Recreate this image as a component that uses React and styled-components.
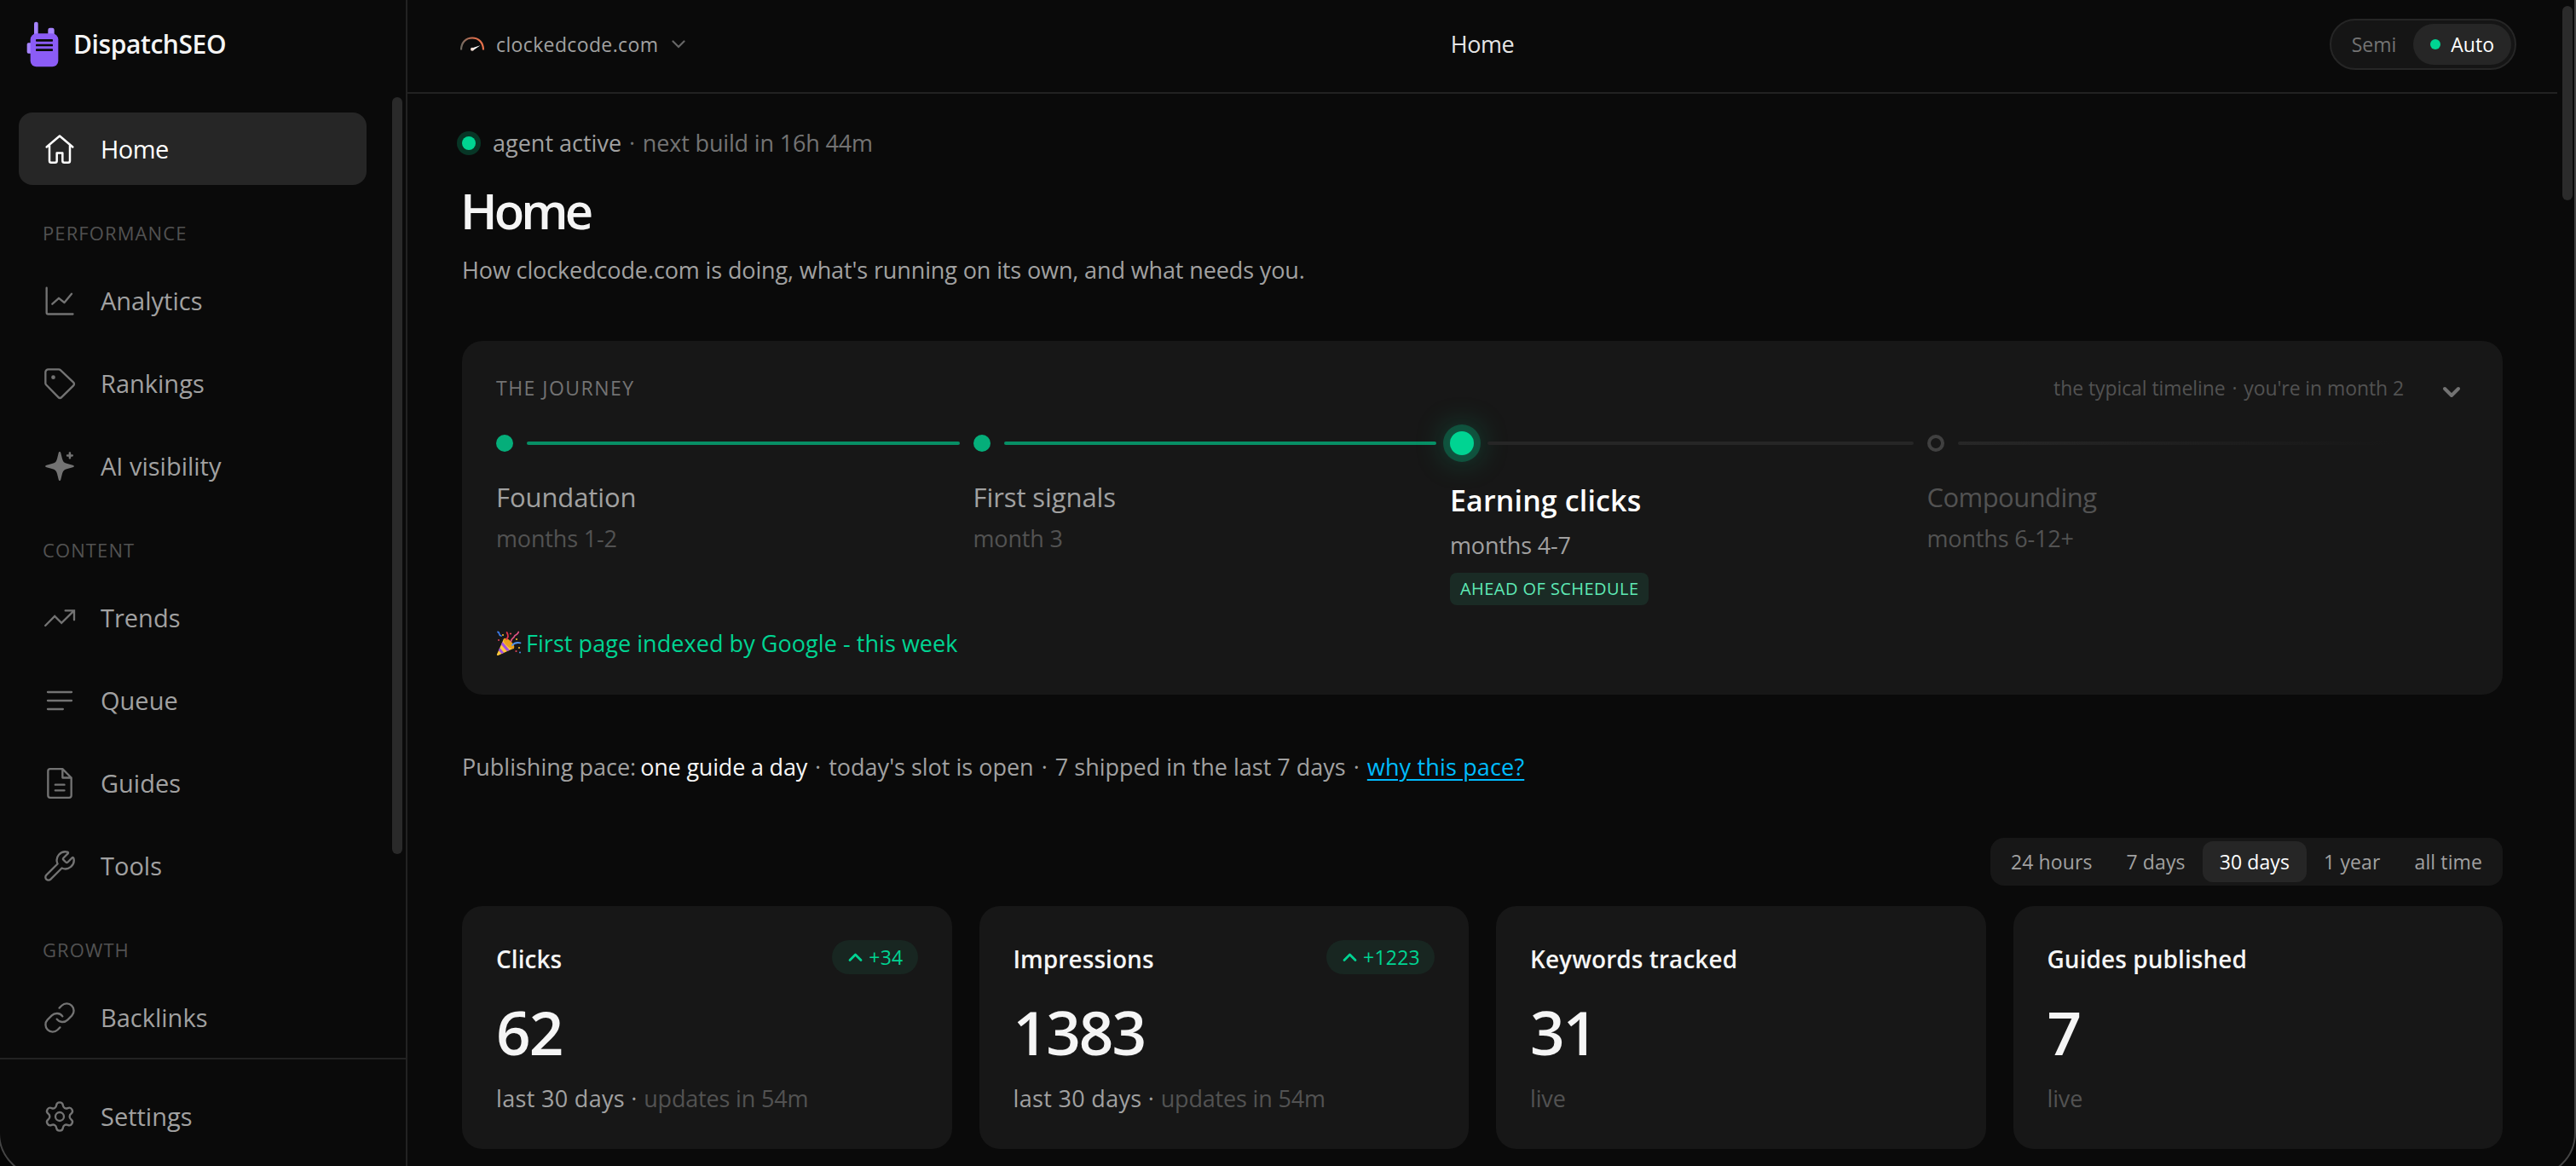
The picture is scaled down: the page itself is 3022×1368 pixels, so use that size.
import React from "react";
import styled, { createGlobalStyle, css } from "styled-components";
import { Link, Settings, Wrench } from "lucide-react";

function App() {
  return (
    <Page>
      <GlobalStyle />
      <Sidebar>
        <Brand>
          <LogoMark />
          DispatchSEO
        </Brand>
        <NavArea>
          <NavList>
            <NavItem $active>
              <HomeIcon />
              Home
            </NavItem>
            {navSections.map(({ title, items }) => (
              <NavSection key={title}>
                <NavLabel>{title}</NavLabel>
                {items.map(({ label, Icon }) => (
                  <NavItem key={label}>
                    <Icon />
                    {label}
                  </NavItem>
                ))}
              </NavSection>
            ))}
          </NavList>
          <SidebarThumb />
        </NavArea>
        <SidebarFooter>
          <NavItem>
            <Settings size={40} strokeWidth={1.4} />
            Settings
          </NavItem>
        </SidebarFooter>
      </Sidebar>

      <Main>
        <TopBar>
          <SiteSwitcher>
            <GaugeIcon />
            <span>clockedcode.com</span>
            <Chevron width="16" height="10" viewBox="0 0 16 10">
              <path d="M1.500 1.500L8 8l6.500-6.500" />
            </Chevron>
          </SiteSwitcher>
          <TopTitle>Home</TopTitle>
          <ModeToggle>
            <Mode>Semi</Mode>
            <Mode $active>
              <ModeDot />
              Auto
            </Mode>
          </ModeToggle>
        </TopBar>

        <Content>
          <AgentStatus>
            <AgentDot />
            <p>
              agent active{" "}
              <Muted>
                <Dot>·</Dot> next build in 16h 44m
              </Muted>
            </p>
          </AgentStatus>
          <Title>Home</Title>
          <Subtitle>
            How clockedcode.com is doing, what's running on its own, and what
            needs you.
          </Subtitle>

          <JourneyCard>
            <JourneyTop>
              <JourneyBody>
                <JourneyHeader>
                  <JourneyHeading>THE JOURNEY</JourneyHeading>
                  <JourneyNote>
                    the typical timeline <Dot>·</Dot> you're in month 2
                  </JourneyNote>
                </JourneyHeader>
                <Stages>
                  {stages.map(({ name, when, state, badge }) => (
                    <Stage key={name}>
                      <StageTrack>
                        <StageDot $state={state} />
                        <StageLine $state={state} />
                      </StageTrack>
                      <StageName $state={state}>{name}</StageName>
                      <StageWhen $state={state}>{when}</StageWhen>
                      {badge && <StageBadge>{badge}</StageBadge>}
                    </Stage>
                  ))}
                </Stages>
              </JourneyBody>
              <CollapseButton>
                <svg width="22" height="14" viewBox="0 0 22 14">
                  <path d="M3 3l8 8 8-8" />
                </svg>
              </CollapseButton>
            </JourneyTop>
            <Milestone>
              <PartyPopper />
              First page indexed by Google - this week
            </Milestone>
          </JourneyCard>

          <Pace>
            Publishing pace: <strong>one guide a day</strong> <Dot>·</Dot>{" "}
            today's slot is open <Dot>·</Dot> 7 shipped in the last 7 days{" "}
            <Dot>·</Dot> <a>why this pace?</a>
          </Pace>

          <RangeTabs>
            {ranges.map((range) => (
              <RangeTab key={range} $active={range === "30 days"}>
                {range}
              </RangeTab>
            ))}
          </RangeTabs>

          <StatGrid>
            {stats.map(({ label, value, change, period, note }) => (
              <StatCard key={label}>
                <StatHeader>
                  <h2>{label}</h2>
                  {change && (
                    <Change>
                      <svg width="18" height="12" viewBox="0 0 18 12">
                        <path d="M3 9.500L9.500 3 16 9.500" />
                      </svg>
                      {change}
                    </Change>
                  )}
                </StatHeader>
                <StatValue>{value}</StatValue>
                <StatFoot>
                  {period && <b>{period} · </b>}
                  {note}
                </StatFoot>
              </StatCard>
            ))}
          </StatGrid>
        </Content>
      </Main>
      <PageGutter>
        <PageThumb />
      </PageGutter>
      <WindowEdge />
    </Page>
  );
}

export default App;

/* icons */

const LogoMark = () => (
  <svg width="40" height="54" viewBox="0 0 120 162">
    <rect x="27" y="2" width="14" height="50" rx="6" fill="#a684ff" />
    <rect x="76" y="23" width="22" height="30" rx="7" fill="#a684ff" />
    <rect x="2" y="76" width="20" height="37" rx="5" fill="#a684ff" />
    <rect x="14" y="43" width="98" height="117" rx="21" fill="#8b5cf6" />
    <g fill="#0a0a0a">
      <rect x="33" y="63" width="60" height="8" rx="2" />
      <rect x="33" y="80" width="60" height="8" rx="2" />
      <rect x="33" y="97" width="60" height="8" rx="2" />
    </g>
  </svg>
);

const NavIcon = ({ children }) => (
  <svg
    width="40"
    height="40"
    viewBox="0 0 24 24"
    fill="none"
    stroke="currentColor"
    strokeWidth="1.4"
    strokeLinecap="round"
    strokeLinejoin="round"
  >
    {children}
  </svg>
);

const HomeIcon = () => (
  <NavIcon>
    <path
      strokeWidth="1.5"
      d="M2.8 10.500L12 2.700l9.200 7.800M4.800 9.300v10.900c0 .7.5 1.200 1.200 1.200h2.800c.7 0 1.200-.5 1.200-1.200v-5.500h4v5.500c0 .7.5 1.200 1.200 1.200H18c.7 0 1.200-.5 1.200-1.200V9.300"
    />
  </NavIcon>
);

const ChartIcon = () => (
  <NavIcon>
    <path d="M2.800 2.800v17.400c0 .6.5 1.100 1.100 1.100h17.400M6.800 14.200l4.600-4.100 3.900 3.100L20.400 7" />
  </NavIcon>
);

const TagIcon = () => (
  <NavIcon>
    <path d="M4 2h7.300a1.800 1.800 0 0 1 1.200.5l9.200 8.700a1.500 1.500 0 0 1 0 2.200l-8.400 8.300a1.500 1.500 0 0 1-2.200 0l-8.600-8.800a1.600 1.600 0 0 1-.5-1.200V4a2 2 0 0 1 2-2z" />
    <circle cx="7.5" cy="7.6" r="1.4" fill="currentColor" stroke="none" />
  </NavIcon>
);

const SparkleIcon = () => (
  <NavIcon>
    <g fill="currentColor" stroke="none">
      <path d="M12 1.800c.5 0 .7.400.8.900l1 4c.5 1.900 1.200 2.800 3.100 3.400l4.300 1.100c.6.200.9.400.9.800s-.3.600-.9.800l-4.300 1.100c-1.900.6-2.600 1.500-3.100 3.400l-1 4c-.1.500-.3.900-.8.900s-.7-.4-.8-.9l-1-4c-.5-1.900-1.200-2.800-3.100-3.400l-4.300-1.100c-.6-.2-.9-.4-.9-.8s.3-.6.9-.8l4.300-1.100c1.900-.6 2.600-1.500 3.100-3.400l1-4c.1-.5.300-.9.800-.9z" />
      <path d="M19.100 2c.4 0 .8.200.8.600v1.100H21c.4 0 .6.400.6.700s-.2.800-.6.800h-1.100v1.100c0 .4-.4.600-.8.600s-.7-.2-.7-.6V5.200h-1.100c-.4 0-.6-.4-.6-.8s.2-.7.600-.7h1.100V2.600c0-.4.3-.6.7-.6z" />
    </g>
  </NavIcon>
);

const TrendIcon = () => (
  <NavIcon>
    <path
      strokeLinejoin="miter"
      d="M1.900 17.400l6.600-6.700 4.800 4.800L22 7M16 6.800h6.200v6.500"
    />
  </NavIcon>
);

const QueueIcon = () => (
  <NavIcon>
    <path d="M3.600 6h16.800M3.600 12h16.800M3.600 18h10.700" />
  </NavIcon>
);

const GuideIcon = () => (
  <NavIcon>
    <path d="M14 1.900H5.300c-.8 0-1.500.7-1.500 1.500v17.200c0 .8.7 1.500 1.500 1.500h13.400c.8 0 1.500-.7 1.500-1.500V8.100L14 1.900v6.200h6.200M8.900 13h6.400M8.900 17h6.400" />
  </NavIcon>
);

const WrenchIcon = () => <Wrench size={40} strokeWidth={1.4} />;
const LinkIcon = () => <Link size={40} strokeWidth={1.4} />;

const GaugeIcon = () => (
  <svg width="32" height="32" viewBox="0 0 32 32">
    <defs>
      <linearGradient id="gauge" x1="0" x2="1">
        <stop offset="0" stopColor="#6f6a61" />
        <stop offset="0.55" stopColor="#d96f4e" />
        <stop offset="1" stopColor="#e8714b" />
      </linearGradient>
    </defs>
    <path
      d="M3 22.500C3 14 8.500 8.500 16 8.500S29 14 29 22.500"
      fill="none"
      stroke="url(#gauge)"
      strokeWidth="2.2"
    />
    <path d="M15.600 20.400L25.500 17.200l-8.300 5.800z" fill="#fff" />
    <circle cx="16" cy="21.800" r="2" fill="#f3dcd2" />
  </svg>
);

const PartyPopper = () => (
  <svg width="30" height="30" viewBox="0 0 30 30">
    <path d="M9 9.500L1 27.500c-.4 1 .4 1.800 1.400 1.400L21 20.500z" fill="#ffc83d" />
    <path
      d="M7.500 13l8.300 9.800-3 1.300L6 16.300zM4.300 20l5 5.700-2.800 1.200-3.600-3.900z"
      fill="#a04fe0"
    />
    <ellipse
      cx="15"
      cy="15"
      rx="3.6"
      ry="8.2"
      transform="rotate(-46 15 15)"
      fill="#e9a01c"
    />
    <g fill="none" strokeWidth="1.8" strokeLinecap="round">
      <path d="M12 10c2.500-2 2.300-5 .6-8" stroke="#e2344c" />
      <path d="M19 17c2-2.500 5.500-3.500 9.500-2.700" stroke="#4b8ff0" />
      <path
        d="M17.500 12.500c.4-4 3-3.500 3.800-5.800.7-2.300 3.500-1 5-5.200"
        stroke="#e05284"
      />
      <path d="M2 1.500c3 .5 0 3.500 4 4.500" stroke="#3d7be8" />
    </g>
    <g fill="#f2b52c">
      <circle cx="8" cy="5" r="1.1" />
      <circle cx="24" cy="10" r="1.1" />
      <circle cx="27" cy="20" r="1.1" />
    </g>
    <g fill="#e2445c">
      <circle cx="17" cy="3.5" r="1.1" />
      <circle cx="23.5" cy="24" r="1.1" />
      <circle cx="3" cy="11" r="1" />
    </g>
    <circle cx="28" cy="25.5" r="1" fill="#4b8ff0" />
  </svg>
);

/* data */

const navSections = [
  {
    title: "PERFORMANCE",
    items: [
      { label: "Analytics", Icon: ChartIcon },
      { label: "Rankings", Icon: TagIcon },
      { label: "AI visibility", Icon: SparkleIcon },
    ],
  },
  {
    title: "CONTENT",
    items: [
      { label: "Trends", Icon: TrendIcon },
      { label: "Queue", Icon: QueueIcon },
      { label: "Guides", Icon: GuideIcon },
      { label: "Tools", Icon: WrenchIcon },
    ],
  },
  {
    title: "GROWTH",
    items: [{ label: "Backlinks", Icon: LinkIcon }],
  },
];

const stages = [
  { name: "Foundation", when: "months 1-2", state: "done" },
  { name: "First signals", when: "month 3", state: "done" },
  {
    name: "Earning clicks",
    when: "months 4-7",
    state: "current",
    badge: "AHEAD OF SCHEDULE",
  },
  { name: "Compounding", when: "months 6-12+", state: "future" },
];

const ranges = ["24 hours", "7 days", "30 days", "1 year", "all time"];

const stats = [
  {
    label: "Clicks",
    value: "62",
    change: "+34",
    period: "last 30 days",
    note: "updates in 54m",
  },
  {
    label: "Impressions",
    value: "1383",
    change: "+1223",
    period: "last 30 days",
    note: "updates in 54m",
  },
  { label: "Keywords tracked", value: "31", note: "live" },
  { label: "Guides published", value: "7", note: "live" },
];

/* styles */

const GlobalStyle = createGlobalStyle`
  * {
    box-sizing: border-box;
    margin: 0;
  }

  body {
    background: #0a0a0a;
    color: #a1a1a1;
    font-family: "Open Sans", sans-serif;
    font-size: 27px;
    line-height: 40px;
    overflow: hidden;
    -webkit-font-smoothing: antialiased;
  }

  svg {
    display: block;
    flex-shrink: 0;
  }
`;

const Page = styled.div`
  position: relative;
  display: flex;
  width: 3022px;
  height: 1368px;
  overflow: hidden;
`;

const Sidebar = styled.aside`
  display: flex;
  flex-direction: column;
  flex-shrink: 0;
  width: 478px;
  border-right: 2px solid #222;
`;

const Brand = styled.div`
  display: flex;
  align-items: center;
  gap: 15px;
  height: 110px;
  padding: 0 0 6px 31px;
  color: #f5f5f5;
  font-size: 30px;
  font-weight: 600;
  letter-spacing: -0.014em;
`;

const NavArea = styled.div`
  display: flex;
  flex: 1;
  min-height: 0;
  padding-right: 4px;
  overflow: hidden;
`;

const NavList = styled.nav`
  flex: 1;
  padding: 22px 30px 0 22px;
`;

const SidebarThumb = styled.div`
  width: 12px;
  height: 888px;
  margin-top: 4px;
  border-radius: 6px;
  background: #2a2a2a;
`;

const NavSection = styled.div``;

const NavLabel = styled.div`
  height: 93px;
  padding: 36px 0 0 28px;
  color: #525252;
  font-size: 22px;
  letter-spacing: 0.05em;
`;

const NavItem = styled.div`
  display: flex;
  align-items: center;
  gap: 28px;
  height: 85px;
  padding-left: 28px;
  border-radius: 16px;
  color: #a1a1a1;
  font-size: 29px;

  & + & {
    margin-top: 12px;
  }

  svg {
    color: #737373;
  }

  ${({ $active }) =>
    $active &&
    css`
      background: #262626;
      color: #fff;
      font-weight: 500;
      letter-spacing: -0.02em;

      svg {
        color: #fff;
      }
    `}
`;

const SidebarFooter = styled.div`
  height: 127px;
  padding: 24px 46px 0 22px;
  border-top: 2px solid #222;
`;

const Main = styled.main`
  flex: 1;
  min-width: 0;
`;

const TopBar = styled.header`
  display: grid;
  grid-template-columns: 1fr auto 1fr;
  align-items: center;
  height: 110px;
  padding: 0 48px 4px;
  border-bottom: 2px solid #222;
`;

const SiteSwitcher = styled.div`
  display: flex;
  align-items: center;
  gap: 12px;
  padding-left: 12px;
  font-size: 23px;
  letter-spacing: 0.016em;
`;

const Chevron = styled.svg`
  margin-left: 4px;
  fill: none;
  stroke: #666;
  stroke-width: 2.2;
  stroke-linecap: round;
`;

const TopTitle = styled.div`
  color: #e5e5e5;
  font-weight: 500;
  letter-spacing: -0.015em;
`;

const ModeToggle = styled.div`
  display: flex;
  justify-self: end;
  height: 60px;
  padding: 4px;
  border: 2px solid #262626;
  border-radius: 30px;
  background: #151515;
`;

const Mode = styled.div`
  display: flex;
  align-items: center;
  gap: 12px;
  padding: 0 20px;
  border-radius: 24px;
  color: #737373;
  font-size: 23px;

  ${({ $active }) =>
    $active &&
    css`
      background: #262626;
      color: #fff;
      font-weight: 500;
    `}
`;

const ModeDot = styled.span`
  width: 12px;
  height: 12px;
  border-radius: 50%;
  background: #00d492;
`;

const Content = styled.div`
  padding: 38px 64px 0;
`;

/* middle dot between two facts on one line */
const Dot = styled.span`
  margin: 0 2px;
`;

const AgentStatus = styled.div`
  display: flex;
  align-items: center;
  gap: 20px;
`;

const AgentDot = styled.span`
  width: 16px;
  height: 16px;
  border-radius: 50%;
  background: #00d492;
  box-shadow: 0 0 0 6px rgba(0, 188, 125, 0.25);
`;

const Muted = styled.span`
  color: #737373;
  letter-spacing: -0.006em;
`;

const Title = styled.h1`
  margin: 23px 0 0 -2px;
  color: #f5f5f5;
  font-size: 58px;
  font-weight: 600;
  line-height: 72px;
  letter-spacing: -0.067em;
`;

const Subtitle = styled.p`
  margin-top: 14px;
  letter-spacing: -0.0045em;
`;

const Card = styled.section`
  border-radius: 24px;
  background: #171717;
`;

const JourneyCard = styled(Card)`
  height: 415px;
  margin-top: 63px;
  padding: 39px 40px 0;
`;

const JourneyTop = styled.div`
  display: flex;
  gap: 36px;
`;

const JourneyBody = styled.div`
  flex: 1;
`;

const JourneyHeader = styled.div`
  display: flex;
  justify-content: space-between;
  font-size: 23px;
  line-height: 33px;
`;

const JourneyHeading = styled.h2`
  color: #737373;
  font-size: inherit;
  font-weight: 400;
  letter-spacing: 0.064em;
`;

const JourneyNote = styled.span`
  color: #525252;
  letter-spacing: -0.004em;
`;

const Stages = styled.div`
  display: grid;
  grid-template-columns: repeat(4, 1fr);
  height: 204px;
  margin-top: 34px;
`;

const Stage = styled.div`
  display: flex;
  flex-direction: column;
  align-items: flex-start;
`;

const StageTrack = styled.div`
  display: flex;
  align-items: center;
  align-self: stretch;
  gap: 16px;
  height: 28px;
  padding-right: 16px;
`;

const dotStyles = {
  done: css`
    width: 20px;
    height: 20px;
    background: #05ae7a;
  `,
  current: css`
    width: 28px;
    height: 28px;
    background: #00d492;
    box-shadow: 0 0 0 8px rgba(0, 212, 146, 0.25),
      0 0 36px 4px rgba(0, 212, 146, 0.35);
  `,
  future: css`
    width: 20px;
    height: 20px;
    border: 4px solid #404040;
  `,
};

const StageDot = styled.span`
  flex-shrink: 0;
  border-radius: 50%;
  ${({ $state }) => dotStyles[$state]}
`;

const lineColors = {
  done: "#078f65",
  current: "#262626",
  future: "linear-gradient(90deg, #272727, #171717)",
};

const StageLine = styled.span`
  flex: 1;
  height: 4px;
  border-radius: 2px;
  background: ${({ $state }) => lineColors[$state]};
`;

const nameStyles = {
  done: css`
    color: #a1a1a1;
    letter-spacing: -0.003em;
  `,
  current: css`
    color: #fff;
    font-size: 34px;
    font-weight: 600;
    line-height: 57px;
    letter-spacing: 0.004em;
  `,
  future: css`
    color: #525252;
    letter-spacing: -0.018em;
  `,
};

const StageName = styled.h3`
  margin-top: 25px;
  font-size: 31px;
  font-weight: 400;
  line-height: 49px;
  ${({ $state }) => nameStyles[$state]}
`;

const StageWhen = styled.p`
  margin-top: 4px;
  color: ${({ $state }) => ($state === "current" ? "#a1a1a1" : "#525252")};
  letter-spacing: -0.006em;
`;

const StageBadge = styled.span`
  height: 38px;
  margin-top: 12px;
  padding: 0 12px;
  border-radius: 8px;
  background: #1a2b25;
  color: #5ee9b5;
  font-size: 20px;
  line-height: 37px;
  letter-spacing: 0.022em;
`;

const CollapseButton = styled.div`
  display: flex;
  align-items: center;
  justify-content: center;
  width: 40px;
  height: 42px;

  path {
    fill: none;
    stroke: #737373;
    stroke-width: 4;
    stroke-linecap: round;
    stroke-linejoin: round;
  }
`;

const Milestone = styled.div`
  display: flex;
  align-items: center;
  gap: 5px;
  margin-top: 25px;
  color: #00d492;
  letter-spacing: 0.002em;
`;

const Pace = styled.p`
  margin-top: 65px;

  strong {
    margin-left: -2px;
    color: #f5f5f5;
    font-weight: 500;
    letter-spacing: -0.007em;
  }

  a {
    color: #00bcff;
    letter-spacing: 0.006em;
    text-decoration: underline;
    text-decoration-thickness: 2px;
    text-underline-offset: 4px;
  }
`;

const RangeTabs = styled.div`
  display: flex;
  width: fit-content;
  height: 56px;
  margin: 63px 0 0 auto;
  padding: 4px;
  border-radius: 16px;
  background: #171717;
`;

const RangeTab = styled.div`
  padding: 0 20px;
  border-radius: 12px;
  background: ${({ $active }) => ($active ? "#262626" : "none")};
  color: ${({ $active }) => ($active ? "#fff" : "#a1a1a1")};
  font-size: 23px;
  font-weight: ${({ $active }) => ($active ? 500 : 400)};
  line-height: 48px;
  letter-spacing: 0.005em;
`;

const StatGrid = styled.div`
  display: grid;
  grid-template-columns: repeat(4, 1fr);
  gap: 32px;
  margin-top: 24px;
`;

const StatCard = styled(Card)`
  height: 285px;
  padding: 40px;
`;

const StatHeader = styled.div`
  display: flex;
  justify-content: space-between;

  h2 {
    color: #f5f5f5;
    font-size: 28px;
    font-weight: 600;
    line-height: 45px;
    letter-spacing: 0.002em;
  }
`;

const Change = styled.span`
  display: flex;
  align-items: center;
  gap: 7px;
  height: 40px;
  padding: 0 17px 0 18px;
  border-radius: 20px;
  background: #182621;
  color: #00d492;
  font-size: 23px;
  font-weight: 500;
  letter-spacing: 0.01em;

  path {
    fill: none;
    stroke: currentColor;
    stroke-width: 2.8;
    stroke-linecap: round;
    stroke-linejoin: round;
  }
`;

const StatValue = styled.div`
  margin-top: 27px;
  color: #f5f5f5;
  font-size: 71px;
  font-weight: 600;
  line-height: 72px;
  letter-spacing: -0.027em;
`;

const StatFoot = styled.p`
  margin-top: 22px;
  color: #525252;
  letter-spacing: -0.006em;

  b {
    color: #a1a1a1;
    font-weight: 400;
    letter-spacing: 0.012em;
  }
`;

const PageGutter = styled.div`
  width: 22px;
  padding: 7px 4px 0 6px;
`;

const PageThumb = styled.div`
  height: 228px;
  border-radius: 6px;
  background: #2b2b2b;
`;

/* rounded window outline over the bottom corners and the right side */
const WindowEdge = styled.div`
  position: absolute;
  top: -60px;
  right: 0;
  bottom: -13px;
  left: -2px;
  border: 2px solid #444;
  border-radius: 52px;
  box-shadow: 0 0 0 40px #050505;
  pointer-events: none;
`;
